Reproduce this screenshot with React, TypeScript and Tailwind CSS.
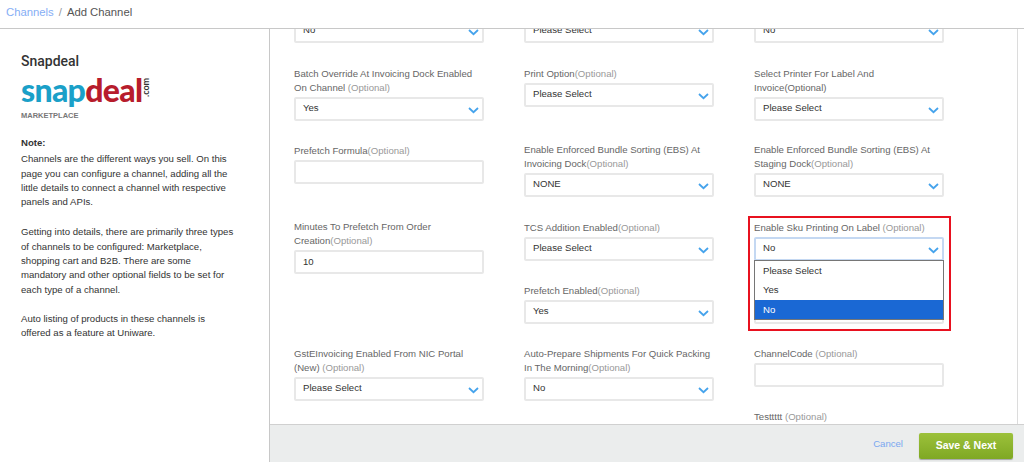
import React from "react";

const sans = { fontFamily: '"Liberation Sans", Arial, sans-serif' };

function Chevron() {
  return (
    <svg width="11" height="7" viewBox="0 0 11 7" className="absolute right-[3px] top-[8px]" fill="none">
      <path d="M1 1l4.5 4.2L10 1" stroke="#45a3ec" strokeWidth="1.8" />
    </svg>
  );
}

function Select({ value, focused }: { value: string; focused?: boolean }) {
  return (
    <div
      className={
        "relative h-[24px] w-[190px] rounded-[2px] border-2 bg-white pl-[7px] text-[9.6px] leading-[18px] text-[#333] " +
        (focused ? "border-[#c4d8f2]" : "border-[#e8e8e8]")
      }
    >
      {value}
      <Chevron />
    </div>
  );
}

function Input({ value }: { value?: string }) {
  return (
    <div className="h-[24px] w-[190px] rounded-[2px] border-2 border-[#e8e8e8] bg-white pl-[7px] text-[9.6px] leading-[19px] text-[#333]">
      {value}
    </div>
  );
}

function Label({ children, opt = "(Optional)" }: { children: React.ReactNode; opt?: string }) {
  return (
    <div className="mb-[2px] w-[190px] text-[9.6px] leading-[14px] text-[#666]">
      {children}
      <span className="text-[#999]">{opt}</span>
    </div>
  );
}

export default function App() {
  return (
    <div className="flex h-[462px] w-[1024px] flex-col overflow-hidden bg-white" style={sans}>
      <header className="h-[29px] shrink-0 border-b border-[#c8c8c8] pl-[6px] text-[11.3px] leading-[24px]">
        <span className="text-[#85aef5]">Channels</span>
        <span className="mx-[5px] text-[#999]">/</span>
        <span className="text-[#555]">Add Channel</span>
      </header>
      <div className="flex min-h-0 flex-1">
        <aside className="w-[270px] shrink-0 border-r border-[#c8c8c8] pl-[21px] pr-[32px] pt-[24px]">
          <h1 className="text-[14px] leading-[16px] text-[#333]" style={{ fontFamily: "Roboto, sans-serif", fontWeight: 500 }}>
            Snapdeal
          </h1>
          <div className="mt-[7px] flex h-[31px] items-start" style={{ fontFamily: "Lato, sans-serif" }}>
            <span className="text-[32px] font-black leading-[28px] tracking-[-0.7px] text-[#1aa0c8]">snap</span>
            <span className="text-[32px] font-black leading-[28px] tracking-[-0.7px] text-[#b71c2c]">deal</span>
            <span className="mt-[1px] h-[21px] rotate-180 text-center text-[9px] font-bold leading-[8px] text-[#333] [writing-mode:vertical-rl]">.com</span>
          </div>
          <div className="mt-[3px] text-[7.5px] font-bold leading-[12px] text-[#777]">MARKETPLACE</div>
          <div className="mt-[14px] text-[9.6px] leading-[14.3px] text-[#333]">
            <div className="mb-[2px] font-bold">Note:</div>
            <p>Channels are the different ways you sell. On this page you can configure a channel, adding all the little details to connect a channel with respective panels and APIs.</p>
            <p className="mt-[16px]">Getting into details, there are primarily three types of channels to be configured: Marketplace, shopping cart and B2B. There are some mandatory and other optional fields to be set for each type of a channel.</p>
            <p className="mt-[15px]">Auto listing of products in these channels is offered as a feature at Uniware.</p>
          </div>
        </aside>
        <div className="flex min-w-0 flex-1 flex-col">
          <div className="flex min-h-0 flex-1">
            <main className="flex h-full w-[748px] gap-[40px] overflow-hidden border-r border-[#dcdcdc] pl-[24px]">
              <section className="-mt-[10px] shrink-0">
                <Select value="No" />
                <div className="mt-[24px]">
                  <Label opt=" (Optional)">Batch Override At Invoicing Dock Enabled On Channel</Label>
                  <Select value="Yes" />
                </div>
                <div className="mt-[23px]">
                  <Label>Prefetch Formula</Label>
                  <Input />
                </div>
                <div className="mt-[36px]">
                  <Label>Minutes To Prefetch From Order Creation</Label>
                  <Input value="10" />
                </div>
                <div className="mt-[73px]">
                  <Label opt=" (Optional)">GstEInvoicing Enabled From NIC Portal (New)</Label>
                  <Select value="Please Select" />
                </div>
              </section>
              <section className="-mt-[10px] shrink-0">
                <Select value="Please Select" />
                <div className="mt-[24px]">
                  <Label>Print Option</Label>
                  <Select value="Please Select" />
                </div>
                <div className="mt-[36px]">
                  <Label>Enable Enforced Bundle Sorting (EBS) At Invoicing Dock</Label>
                  <Select value="NONE" />
                </div>
                <div className="mt-[24px]">
                  <Label>TCS Addition Enabled</Label>
                  <Select value="Please Select" />
                </div>
                <div className="mt-[23px]">
                  <Label>Prefetch Enabled</Label>
                  <Select value="Yes" />
                </div>
                <div className="mt-[23px]">
                  <Label>Auto-Prepare Shipments For Quick Packing In The Morning</Label>
                  <Select value="No" />
                </div>
              </section>
              <section className="-mt-[10px] shrink-0">
                <Select value="No" />
                <div className="mt-[24px]">
                  <Label opt="">Select Printer For Label And Invoice(Optional)</Label>
                  <Select value="Please Select" />
                </div>
                <div className="mt-[22px]">
                  <Label>Enable Enforced Bundle Sorting (EBS) At Staging Dock</Label>
                  <Select value="NONE" />
                </div>
                <div className="relative mt-[24px]">
                  <Label opt=" (Optional)">Enable Sku Printing On Label</Label>
                  <Select value="No" focused />
                  <div className="mt-[39px]">
                    <Input />
                  </div>
                  <div className="absolute left-[-6px] top-[-5px] z-10 h-[115px] w-[203px] border-[2px] border-[#e8111f]" />
                  <div className="absolute left-0 top-[39px] w-[190px] border border-[#767676] bg-white text-[9.6px] leading-[19.4px] text-[#333]">
                    <div className="pl-[8px]">Please Select</div>
                    <div className="pl-[8px]">Yes</div>
                    <div className="bg-[#1a68d4] pl-[8px] text-white">No</div>
                  </div>
                </div>
                <div className="mt-[23px]">
                  <Label opt=" (Optional)">ChannelCode</Label>
                  <Input />
                </div>
                <div className="mt-[23px]">
                  <Label opt=" (Optional)">Testtttt</Label>
                </div>
              </section>
            </main>
          </div>
          <footer className="flex h-[38px] shrink-0 items-center justify-end border-t border-[#d0d0d0] bg-[#ebeded] pr-[11px] pt-[4px]">
            <span className="mb-[2px] mr-[16px] text-[9.6px] text-[#7aa7f0]">Cancel</span>
            <button className="h-[26px] w-[94px] rounded-[2px] bg-gradient-to-b from-[#9cc13a] to-[#7fa823] text-[10.5px] font-bold text-white shadow-[0_1px_1px_rgba(0,0,0,0.3)]">
              Save &amp; Next
            </button>
          </footer>
        </div>
      </div>
    </div>
  );
}
